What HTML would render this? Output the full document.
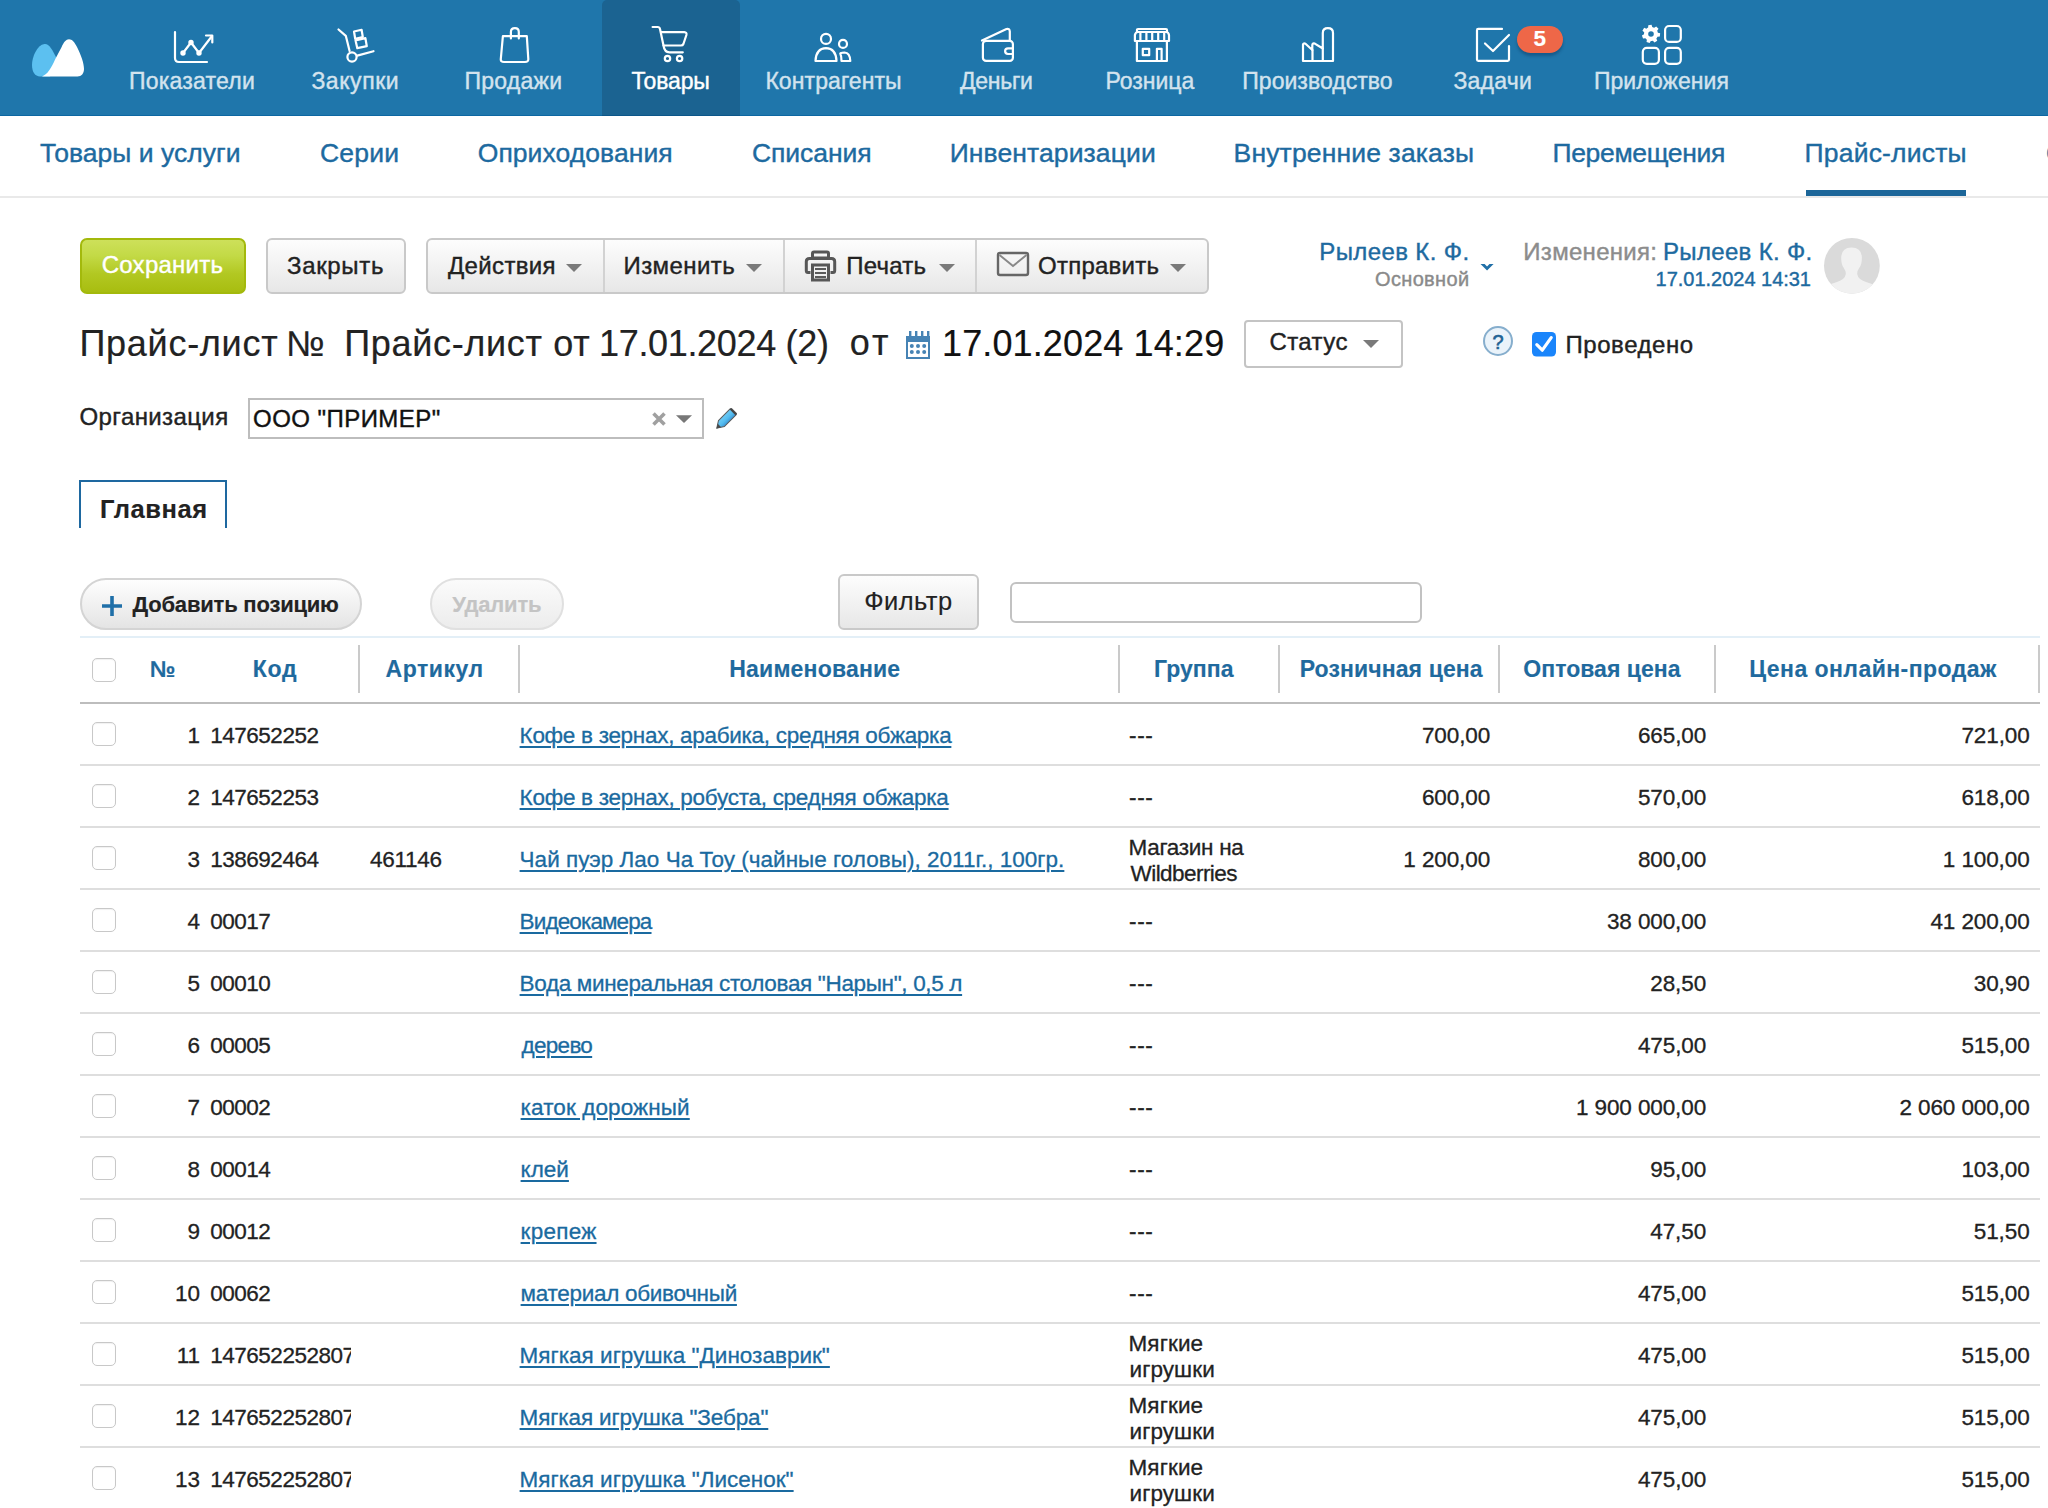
<!DOCTYPE html>
<html lang="ru"><head><meta charset="utf-8"><title>Прайс-лист</title>
<style>
html,body{margin:0;padding:0;width:2048px;height:1508px;overflow:hidden;background:#fff;}
body{position:relative;font-family:"Liberation Sans",sans-serif;}
.t{position:absolute;white-space:nowrap;font-family:"Liberation Sans",sans-serif;}
.b{position:absolute;}
</style></head><body>
<div class="b" style="left:0px;top:0px;width:2048px;height:116px;background:#1f76ab;"></div>
<div class="b" style="left:0px;top:115px;width:2048px;height:1px;background:#0c67a2;"></div>
<div class="b" style="left:602px;top:0px;width:138px;height:116px;background:#1b6391;border-top-left-radius:5px;border-top-right-radius:5px;"></div>
<div class="b" style="left:602px;top:115px;width:138px;height:1px;background:#0c5689;"></div>
<div class="t" style="top:69.6px;font-size:23px;line-height:23px;color:#d3e3ee;letter-spacing:0.222px;-webkit-text-stroke:0.4px #d3e3ee;left:129.0px;">Показатели</div>
<div class="t" style="top:69.6px;font-size:23px;line-height:23px;color:#d3e3ee;letter-spacing:0.567px;-webkit-text-stroke:0.4px #d3e3ee;left:311.4px;">Закупки</div>
<div class="t" style="top:69.6px;font-size:23px;line-height:23px;color:#d3e3ee;letter-spacing:0.267px;-webkit-text-stroke:0.4px #d3e3ee;left:464.4px;">Продажи</div>
<div class="t" style="top:69.6px;font-size:23px;line-height:23px;color:#d3e3ee;letter-spacing:0.080px;-webkit-text-stroke:0.4px #d3e3ee;left:765.4px;">Контрагенты</div>
<div class="t" style="top:69.6px;font-size:23px;line-height:23px;color:#d3e3ee;letter-spacing:-0.300px;-webkit-text-stroke:0.4px #d3e3ee;left:960.1px;">Деньги</div>
<div class="t" style="top:69.6px;font-size:23px;line-height:23px;color:#d3e3ee;-webkit-text-stroke:0.4px #d3e3ee;left:1105.4px;">Розница</div>
<div class="t" style="top:69.6px;font-size:23px;line-height:23px;color:#d3e3ee;letter-spacing:0.027px;-webkit-text-stroke:0.4px #d3e3ee;left:1242.3px;">Производство</div>
<div class="t" style="top:69.6px;font-size:23px;line-height:23px;color:#d3e3ee;letter-spacing:0.260px;-webkit-text-stroke:0.4px #d3e3ee;left:1453.4px;">Задачи</div>
<div class="t" style="top:69.6px;font-size:23px;line-height:23px;color:#d3e3ee;letter-spacing:0.056px;-webkit-text-stroke:0.4px #d3e3ee;left:1593.9px;">Приложения</div>
<div class="t" style="top:69.6px;font-size:23px;line-height:23px;color:#ffffff;letter-spacing:-0.160px;-webkit-text-stroke:0.4px #ffffff;left:631.5px;">Товары</div>
<svg class="b" style="left:0;top:0" width="2048" height="116" viewBox="0 0 2048 116" fill="none" stroke="#fff" stroke-width="2.2" stroke-linecap="round" stroke-linejoin="round"><path stroke="none" fill="#5cc0f0" d="M32 65 C32 57 37 45 44.5 44 C49 43.5 52 49 57 59 L50 76.4 L40 76.4 C35 76.4 32 72 32 65 Z"/><path stroke="none" fill="#fff" d="M42 76.4 C47 75 51.5 68 55.3 59 L61.5 47.2 C64 42 66 39.3 69 39.3 C72 39.3 74.5 42 77 47 C81 55 84 63 84 69 C84 73.5 81.5 76.4 77.5 76.4 Z"/><path d="M175 32 V58 Q175 62 179 62 H207"/><path d="M183 53 L191 42.5 L199 53 L212 36"/><path d="M206 35.5 H212.3 V42.5"/><circle cx="183" cy="53" r="1.6" fill="#fff"/><circle cx="191" cy="42.5" r="1.6" fill="#fff"/><circle cx="199" cy="53" r="1.6" fill="#fff"/><path d="M338.5 29.5 L345.8 35.8 L349.6 51"/><circle cx="352" cy="57" r="4.6"/><path d="M357.3 55.6 L373.5 51.2"/><path d="M355.5 40.3 L365.4 38.2 L366.8 46.2 L357.3 48.2 Z"/><path d="M354 31.5 L361.6 29.8 L362.8 37 L355.2 38.7 Z"/><path d="M502.9 36.1 H526.8 L528.3 59 Q528.5 62 525 62 H504 Q500.5 62 500.8 59 Z"/><path d="M510.9 38.5 V32 Q510.9 28.2 514.9 28.2 Q518.8 28.2 518.8 32 V38.5"/><path d="M652.6 27 H657.8 Q659.5 27 660 29 L663.5 45.5 Q664.5 52.3 669.5 52.3 H682.8"/><path d="M661 32.1 H684.3 Q687 32.3 686.4 35 L683.4 44 Q682.8 45.5 681 45.5 H663.5"/><circle cx="667.5" cy="58.5" r="2.7"/><circle cx="679.6" cy="58.5" r="2.7"/><circle cx="826" cy="38.9" r="5"/><path d="M815.5 61 Q816 48.5 826 48.2 Q836 48.5 836.5 61 Z"/><circle cx="843" cy="43.9" r="4"/><path d="M840.3 53.5 Q842 52.5 844.5 52.5 Q850 52.8 850.3 61 H841.5 Q841.5 56 840.3 53.5"/><rect x="982.9" y="40.9" width="30" height="20" rx="3.2"/><path d="M982 40.5 L1006.5 29 Q1009.5 28.2 1009.8 31.5 V40.5"/><path d="M1012.9 48.3 H1008 Q1005.1 48.3 1005.1 51.1 Q1005.1 54 1008 54 H1012.9"/><path d="M1136.9 61 V41.5 M1166.9 41.5 V61 H1136.9"/><path d="M1137 31.5 V29.5 Q1137 29 1138 29 H1166 Q1167 29 1167 30 V31.5"/><path d="M1134.9 41 V35 Q1135.5 32 1138 32 H1166 Q1168.5 32 1169 35 V41 Z"/><path d="M1140.4 32.5 V41 M1146.4 32.5 V41 M1152.2 32.5 V41 M1158.2 32.5 V41 M1164.2 32.5 V41"/><rect x="1142.8" y="48.8" width="6.4" height="6.4"/><path d="M1156.9 61 V48.8 H1161.6 V61"/><path d="M1303 61 V44.5 Q1303.5 42.8 1305.5 43.8 L1312.3 50 V45 Q1312.8 42.8 1314.8 43.6 L1322.8 48.5 V33 Q1322.8 28.2 1327.9 28.2 Q1333 28.2 1333 33 V61 Z"/><path d="M1312.5 50 V61 M1322.8 48.5 V61"/><path d="M1502 28.9 H1478.3 Q1477 28.9 1477 30.2 V59.6 Q1477 60.9 1478.3 60.9 H1507.7 Q1509 60.9 1509 59.6 V46"/><path d="M1485 43.5 L1493 51 L1509 35"/><rect x="1665.1" y="26" width="15.7" height="15.9" rx="4"/><rect x="1642.8" y="47.9" width="16.1" height="15.9" rx="4"/><rect x="1665.1" y="47.9" width="15.7" height="15.9" rx="4"/><path stroke="none" fill="#fff" fill-rule="evenodd" d="M1648.15 27.61 L1648.28 25.21 L1651.55 24.82 L1652.25 27.11 L1653.27 27.38 L1654.22 27.78 L1656.18 26.39 L1658.52 28.71 L1657.17 30.69 L1657.59 31.64 L1657.87 32.64 L1660.17 33.31 L1659.83 36.58 L1657.44 36.75 L1656.95 37.69 L1656.34 38.52 L1657.26 40.74 L1654.49 42.51 L1652.86 40.75 L1651.83 40.95 L1650.80 41.00 L1649.64 43.10 L1646.52 42.03 L1646.88 39.66 L1646.08 38.98 L1645.40 38.21 L1643.04 38.61 L1641.92 35.51 L1644.01 34.31 L1644.04 33.26 L1644.22 32.25 L1642.43 30.65 L1644.16 27.84 L1646.40 28.73 L1647.24 28.10 Z M1653.8 34 A2.8 2.8 0 1 0 1648.2 34 A2.8 2.8 0 1 0 1653.8 34 Z"/></svg>
<div class="b" style="left:1517px;top:26px;width:46px;height:27px;background:#ee6748;border-radius:14px;box-shadow:0 3px 3px rgba(0,40,80,0.35);"></div>
<div class="t" style="top:28.0px;font-size:22.5px;line-height:22.5px;color:#fff;font-weight:700;-webkit-text-stroke:0.15px #fff;left:1039.8px;width:1000px;text-align:center;">5</div>
<div class="t" style="top:139.6px;font-size:26.5px;line-height:26.5px;color:#1d6aa0;letter-spacing:0.036px;-webkit-text-stroke:0.4px #1d6aa0;left:40.0px;">Товары и услуги</div>
<div class="t" style="top:139.6px;font-size:26.5px;line-height:26.5px;color:#1d6aa0;letter-spacing:0.200px;-webkit-text-stroke:0.4px #1d6aa0;left:320.0px;">Серии</div>
<div class="t" style="top:139.6px;font-size:26.5px;line-height:26.5px;color:#1d6aa0;letter-spacing:0.075px;-webkit-text-stroke:0.4px #1d6aa0;left:477.7px;">Оприходования</div>
<div class="t" style="top:139.6px;font-size:26.5px;line-height:26.5px;color:#1d6aa0;letter-spacing:-0.057px;-webkit-text-stroke:0.4px #1d6aa0;left:751.9px;">Списания</div>
<div class="t" style="top:139.6px;font-size:26.5px;line-height:26.5px;color:#1d6aa0;letter-spacing:0.108px;-webkit-text-stroke:0.4px #1d6aa0;left:949.7px;">Инвентаризации</div>
<div class="t" style="top:139.6px;font-size:26.5px;line-height:26.5px;color:#1d6aa0;letter-spacing:0.150px;-webkit-text-stroke:0.4px #1d6aa0;left:1233.6px;">Внутренние заказы</div>
<div class="t" style="top:139.6px;font-size:26.5px;line-height:26.5px;color:#1d6aa0;letter-spacing:-0.340px;-webkit-text-stroke:0.4px #1d6aa0;left:1552.5px;">Перемещения</div>
<div class="t" style="top:139.6px;font-size:26.5px;line-height:26.5px;color:#1d6aa0;letter-spacing:0.180px;-webkit-text-stroke:0.4px #1d6aa0;left:1804.6px;">Прайс-листы</div>
<div class="t" style="top:139.6px;font-size:26.5px;line-height:26.5px;color:#1d6aa0;-webkit-text-stroke:0.4px #1d6aa0;left:2046.0px;">Серийные номера</div>
<div class="b" style="left:0px;top:196px;width:2048px;height:2px;background:#e9e9e9;"></div>
<div class="b" style="left:1806px;top:190px;width:160px;height:6px;background:#1c6699;"></div>
<div class="b" style="left:80px;top:238px;width:166px;height:56px;background:linear-gradient(#cde05a 0%,#c3da46 30%,#b2c822 65%,#a8bd10 100%);border:2px solid #a3b90c;border-radius:7px;box-sizing:border-box;"></div>
<div class="t" style="top:253.2px;font-size:24px;line-height:24px;color:#ffffff;letter-spacing:0.263px;-webkit-text-stroke:0.4px #ffffff;left:101.7px;">Сохранить</div>
<div class="b" style="left:266px;top:238px;width:140px;height:56px;background:linear-gradient(#fdfdfd,#e7e7e7);border:2px solid #c9c9c9;border-radius:6px;box-sizing:border-box;"></div>
<div class="t" style="top:253.7px;font-size:24px;line-height:24px;color:#222;letter-spacing:0.667px;-webkit-text-stroke:0.4px #222;left:287.0px;">Закрыть</div>
<div class="b" style="left:426px;top:238px;width:783px;height:56px;background:linear-gradient(#fdfdfd,#e7e7e7);border:2px solid #c9c9c9;border-radius:6px;box-sizing:border-box;"></div>
<div class="b" style="left:603px;top:240px;width:2px;height:52px;background:#d2d2d2;"></div>
<div class="b" style="left:783px;top:240px;width:2px;height:52px;background:#d2d2d2;"></div>
<div class="b" style="left:975px;top:240px;width:2px;height:52px;background:#d2d2d2;"></div>
<div class="t" style="top:253.7px;font-size:24px;line-height:24px;color:#222;letter-spacing:0.343px;-webkit-text-stroke:0.4px #222;left:448.0px;">Действия</div>
<div class="t" style="top:253.7px;font-size:24px;line-height:24px;color:#222;letter-spacing:0.429px;-webkit-text-stroke:0.4px #222;left:623.5px;">Изменить</div>
<div class="t" style="top:253.7px;font-size:24px;line-height:24px;color:#222;letter-spacing:0.260px;-webkit-text-stroke:0.4px #222;left:846.2px;">Печать</div>
<div class="t" style="top:253.7px;font-size:24px;line-height:24px;color:#222;letter-spacing:0.250px;-webkit-text-stroke:0.4px #222;left:1038.0px;">Отправить</div>
<svg class="b" style="left:0;top:230px" width="1300" height="70" viewBox="0 230 1300 70"><path d="M566 264 H582 L574 272 Z" fill="#7a7a7a"/><path d="M746 264 H762 L754 272 Z" fill="#7a7a7a"/><path d="M939 264 H955 L947 272 Z" fill="#7a7a7a"/><path d="M1170 264 H1186 L1178 272 Z" fill="#7a7a7a"/><g fill="none" stroke="#575757" stroke-width="3"><rect x="812.5" y="252" width="16" height="6" rx="1.5"/><path d="M810.5 272.5 H808 Q806.3 272.5 806.3 270.5 V261.5 Q806.3 258.5 809.5 258.5 H831.5 Q834.7 258.5 834.7 261.5 V270.5 Q834.7 272.5 833 272.5 H830.5"/><rect x="812.5" y="265" width="16" height="15"/></g><path d="M815 269 H826 M815 273 H826 M815 277 H826" stroke="#5a5a5a" stroke-width="1.8"/><rect x="998" y="253" width="30" height="22" rx="2" fill="none" stroke="#666" stroke-width="2.4"/><path d="M999.5 255 L1013 266 L1026.5 255" fill="none" stroke="#888" stroke-width="2"/></svg>
<div class="t" style="top:239.7px;font-size:24px;line-height:24px;color:#1d6aa0;letter-spacing:0.382px;-webkit-text-stroke:0.4px #1d6aa0;left:1319.3px;">Рылеев К. Ф.</div>
<div class="t" style="top:268.6px;font-size:20px;line-height:20px;color:#8a8a8a;letter-spacing:0.343px;-webkit-text-stroke:0.4px #8a8a8a;left:1375.0px;">Основной</div>
<svg class="b" style="left:1470px;top:255px" width="30" height="20" viewBox="1470 255 30 20"><path d="M1480.5 264 H1484.6 L1487.05 266.4 L1489.5 264 H1493.6 L1487.05 270.4 Z" fill="#2170a8"/></svg>
<div class="t" style="top:239.7px;font-size:24px;line-height:24px;color:#8c8c8c;letter-spacing:0.300px;-webkit-text-stroke:0.4px #8c8c8c;left:1523.3px;">Изменения:</div>
<div class="t" style="top:239.7px;font-size:24px;line-height:24px;color:#1d6aa0;letter-spacing:0.327px;-webkit-text-stroke:0.4px #1d6aa0;left:1663.0px;">Рылеев К. Ф.</div>
<div class="t" style="top:268.6px;font-size:20px;line-height:20px;color:#1d6aa0;letter-spacing:-0.020px;-webkit-text-stroke:0.4px #1d6aa0;left:1655.6px;">17.01.2024 14:31</div>
<svg class="b" style="left:1815px;top:230px" width="75" height="70" viewBox="1815 230 75 70"><clipPath id="av"><circle cx="1851.9" cy="265.8" r="27.9"/></clipPath><circle cx="1851.9" cy="265.8" r="27.9" fill="#dadada"/><path clip-path="url(#av)" fill="#f1f1f1" d="M1841.2 258 Q1841.2 247.4 1851.5 247.4 Q1861.9 247.4 1861.9 258 Q1861.9 264.5 1859.2 268 Q1857 271 1857.2 274 Q1858 279.5 1866 282 L1875 285 L1875 300 L1828 300 L1828 285 L1837 282 Q1845 279.5 1845.8 274 Q1846 271 1843.8 268 Q1841.2 264.5 1841.2 258 Z"/></svg>
<div class="t" style="top:325.6px;font-size:36px;line-height:36px;color:#222;letter-spacing:0.722px;-webkit-text-stroke:0.2px #222;left:79.5px;">Прайс-лист</div>
<div class="t" style="top:325.6px;font-size:36px;line-height:36px;color:#222;letter-spacing:-1.700px;-webkit-text-stroke:0.2px #222;left:285.9px;">№</div>
<div class="t" style="top:325.6px;font-size:36px;line-height:36px;color:#222;letter-spacing:0.667px;-webkit-text-stroke:0.2px #222;left:344.3px;">Прайс-лист от</div>
<div class="t" style="top:325.6px;font-size:36px;line-height:36px;color:#222;letter-spacing:-0.331px;-webkit-text-stroke:0.2px #222;left:599.0px;">17.01.2024 (2)</div>
<div class="t" style="top:324.6px;font-size:36px;line-height:36px;color:#222;letter-spacing:3.000px;-webkit-text-stroke:0.2px #222;left:849.8px;">от</div>
<div class="t" style="top:325.6px;font-size:36px;line-height:36px;color:#111;letter-spacing:0.127px;-webkit-text-stroke:0.2px #111;left:942.0px;">17.01.2024 14:29</div>
<svg class="b" style="left:905px;top:330px" width="27" height="29" viewBox="0 0 27 29" fill="#4683b4"><rect x="1" y="6" width="24" height="23"/><rect x="3" y="12" width="20" height="15" fill="#fff"/><rect x="4" y="1" width="2.4" height="6"/><rect x="10" y="1" width="2.4" height="6"/><rect x="16" y="1" width="2.4" height="6"/><rect x="22" y="1" width="2.4" height="6"/><circle cx="6.8" cy="16" r="2"/><circle cx="13" cy="16" r="2"/><circle cx="19.2" cy="16" r="2"/><circle cx="6.8" cy="22" r="2"/><circle cx="13" cy="22" r="2"/><circle cx="19.2" cy="22" r="2"/></svg>
<div class="b" style="left:1244px;top:320px;width:159px;height:48px;background:#fff;border:2px solid #c4c4c4;border-radius:4px;box-sizing:border-box;"></div>
<div class="t" style="top:329.7px;font-size:24px;line-height:24px;color:#222;letter-spacing:0.440px;-webkit-text-stroke:0.4px #222;left:1269.4px;">Статус</div>
<svg class="b" style="left:1360px;top:338px" width="22" height="14"><path d="M3 2 H19 L11 10 Z" fill="#7a7a7a"/></svg>
<svg class="b" style="left:1481px;top:325px" width="34" height="34" viewBox="0 0 34 34"><circle cx="17" cy="16" r="14" fill="#eaf3fa" stroke="#86aecd" stroke-width="2"/><text x="17" y="23.8" text-anchor="middle" font-family="Liberation Sans" font-size="20" fill="#1f6395" stroke="#1f6395" stroke-width="0.6">?</text></svg>
<svg class="b" style="left:1531px;top:331px" width="27" height="27" viewBox="0 0 27 27"><rect x="1" y="1" width="24" height="24.5" rx="4.5" fill="#1a85fb"/><path d="M5.8 13.6 L11.3 19.2 L20.2 6.6" fill="none" stroke="#fff" stroke-width="3.2" stroke-linecap="round" stroke-linejoin="round"/></svg>
<div class="t" style="top:332.7px;font-size:24px;line-height:24px;color:#222;letter-spacing:0.550px;-webkit-text-stroke:0.4px #222;left:1565.5px;">Проведено</div>
<div class="t" style="top:404.7px;font-size:24px;line-height:24px;color:#222;letter-spacing:0.390px;-webkit-text-stroke:0.4px #222;left:79.5px;">Организация</div>
<div class="b" style="left:248px;top:398px;width:456px;height:41px;background:#fff;border:2px solid #bdbdbd;box-sizing:border-box;"></div>
<div class="t" style="top:406.7px;font-size:24px;line-height:24px;color:#111;letter-spacing:0.445px;-webkit-text-stroke:0.4px #111;left:253.1px;">ООО "ПРИМЕР"</div>
<svg class="b" style="left:640px;top:400px" width="110" height="40" viewBox="640 400 110 40"><path d="M653.5 413.5 L664.5 424.5 M664.5 413.5 L653.5 424.5" stroke="#a0a0a0" stroke-width="3.6"/><path d="M676 415.3 H692 L684 423 Z" fill="#777"/><defs><linearGradient id="pg" x1="0" y1="0" x2="0" y2="1"><stop offset="0" stop-color="#6fcaf4"/><stop offset="0.55" stop-color="#55bdf0"/><stop offset="1" stop-color="#3a96d6"/></linearGradient></defs><g transform="rotate(-45 726 419)"><path d="M719.5 414.8 H736 Q737.3 414.8 737.3 416 V422 Q737.3 423.2 736 423.2 H719.5 L713 419 Z" fill="url(#pg)" stroke="#5a5a5a" stroke-width="1"/><path d="M716.8 416.6 L712.6 419 L716.8 421.4 Z" fill="#4a4a4a"/><rect x="735.3" y="415" width="2" height="8" fill="#444"/></g></svg>
<div class="b" style="left:79px;top:480px;width:148px;height:48px;border:2px solid #1e68a0;border-bottom:none;box-sizing:border-box;"></div>
<div class="t" style="top:496.5px;font-size:25.5px;line-height:25.5px;color:#222;font-weight:700;letter-spacing:0.567px;-webkit-text-stroke:0.15px #222;left:100.0px;">Главная</div>
<div class="b" style="left:80px;top:578px;width:282px;height:52px;background:linear-gradient(#fefefe,#e4e4e4);border:2px solid #d4d4d4;border-radius:26px;box-sizing:border-box;"></div>
<svg class="b" style="left:100px;top:594px" width="24" height="24"><path d="M12 2 V22 M2 12 H22" stroke="#1f6fa8" stroke-width="3.6"/></svg>
<div class="t" style="top:594.4px;font-size:22px;line-height:22px;color:#222;font-weight:700;letter-spacing:-0.200px;-webkit-text-stroke:0.15px #222;left:132.5px;">Добавить позицию</div>
<div class="b" style="left:430px;top:578px;width:134px;height:52px;background:linear-gradient(#fbfbfb,#ececec);border:2px solid #e0e0e0;border-radius:26px;box-sizing:border-box;"></div>
<div class="t" style="top:594.4px;font-size:22px;line-height:22px;color:#c4c4c4;font-weight:700;letter-spacing:-0.183px;-webkit-text-stroke:0.15px #c4c4c4;left:452.3px;">Удалить</div>
<div class="b" style="left:838px;top:574px;width:141px;height:56px;background:linear-gradient(#fdfdfd,#e7e7e7);border:2px solid #c9c9c9;border-radius:6px;box-sizing:border-box;"></div>
<div class="t" style="top:588.5px;font-size:25.5px;line-height:25.5px;color:#222;letter-spacing:0.420px;-webkit-text-stroke:0.15px #222;left:864.3px;">Фильтр</div>
<div class="b" style="left:1010px;top:582px;width:412px;height:41px;background:#fff;border:2px solid #c2c2c2;border-radius:6px;box-sizing:border-box;"></div>
<div class="b" style="left:80px;top:636px;width:1960px;height:2px;background:#e3eff7;"></div>
<div class="b" style="left:80px;top:702px;width:1960px;height:2px;background:#bdbdbd;"></div>
<div class="b" style="left:358px;top:645px;width:2px;height:48px;background:#cacaca;"></div>
<div class="b" style="left:518px;top:645px;width:2px;height:48px;background:#cacaca;"></div>
<div class="b" style="left:1118px;top:645px;width:2px;height:48px;background:#cacaca;"></div>
<div class="b" style="left:1278px;top:645px;width:2px;height:48px;background:#cacaca;"></div>
<div class="b" style="left:1498px;top:645px;width:2px;height:48px;background:#cacaca;"></div>
<div class="b" style="left:1714px;top:645px;width:2px;height:48px;background:#cacaca;"></div>
<div class="b" style="left:2038px;top:645px;width:2px;height:48px;background:#cacaca;"></div>
<div class="b" style="left:92px;top:658px;width:24px;height:24px;background:#fff;border:1.5px solid #c8c8c8;border-radius:5px;box-sizing:border-box;box-shadow:inset 0 1px 1px rgba(0,0,0,0.06);"></div>
<div class="t" style="top:657.6px;font-size:23px;line-height:23px;color:#1f6a9e;font-weight:700;letter-spacing:2.700px;-webkit-text-stroke:0.15px #1f6a9e;left:149.9px;">№</div>
<div class="t" style="top:657.6px;font-size:23px;line-height:23px;color:#1f6a9e;font-weight:700;letter-spacing:0.750px;-webkit-text-stroke:0.15px #1f6a9e;left:252.8px;">Код</div>
<div class="t" style="top:657.6px;font-size:23px;line-height:23px;color:#1f6a9e;font-weight:700;letter-spacing:0.533px;-webkit-text-stroke:0.15px #1f6a9e;left:385.6px;">Артикул</div>
<div class="t" style="top:657.6px;font-size:23px;line-height:23px;color:#1f6a9e;font-weight:700;letter-spacing:0.191px;-webkit-text-stroke:0.15px #1f6a9e;left:729.3px;">Наименование</div>
<div class="t" style="top:657.6px;font-size:23px;line-height:23px;color:#1f6a9e;font-weight:700;letter-spacing:0.040px;-webkit-text-stroke:0.15px #1f6a9e;left:1154.0px;">Группа</div>
<div class="t" style="top:657.6px;font-size:23px;line-height:23px;color:#1f6a9e;font-weight:700;letter-spacing:0.115px;-webkit-text-stroke:0.15px #1f6a9e;left:1299.7px;">Розничная цена</div>
<div class="t" style="top:657.6px;font-size:23px;line-height:23px;color:#1f6a9e;font-weight:700;letter-spacing:0.036px;-webkit-text-stroke:0.15px #1f6a9e;left:1523.3px;">Оптовая цена</div>
<div class="t" style="top:657.6px;font-size:23px;line-height:23px;color:#1f6a9e;font-weight:700;letter-spacing:0.453px;-webkit-text-stroke:0.15px #1f6a9e;left:1749.3px;">Цена онлайн-продаж</div>
<div class="b" style="left:80px;top:764px;width:1960px;height:2px;background:#dedede;"></div>
<div class="b" style="left:92px;top:722px;width:24px;height:24px;background:#fff;border:1.5px solid #c8c8c8;border-radius:5px;box-sizing:border-box;box-shadow:inset 0 1px 1px rgba(0,0,0,0.06);"></div>
<div class="t" style="top:724.5px;font-size:22.5px;line-height:22.5px;color:#222;letter-spacing:-0.100px;-webkit-text-stroke:0.3px #222;right:1848.1px;">1</div>
<div class="b" style="left:207px;top:715px;width:144px;height:40px;overflow:hidden">
<div class="t" style="top:9.5px;font-size:22.5px;line-height:22.5px;color:#222;letter-spacing:-0.500px;-webkit-text-stroke:0.3px #222;left:3.3px;">147652252</div>
</div>
<div class="t" style="top:724.5px;font-size:22.5px;line-height:22.5px;color:#1a6aa0;letter-spacing:-0.295px;-webkit-text-stroke:0.3px #1a6aa0;left:519.6px;text-decoration:underline;text-underline-offset:3px;text-decoration-thickness:1.6px;">Кофе в зернах, арабика, средняя обжарка</div>
<div class="t" style="top:724.5px;font-size:22.5px;line-height:22.5px;color:#222;letter-spacing:0.650px;-webkit-text-stroke:0.3px #222;left:1129.0px;">---</div>
<div class="t" style="top:724.5px;font-size:22.5px;line-height:22.5px;color:#222;letter-spacing:-0.100px;-webkit-text-stroke:0.3px #222;right:557.9px;">700,00</div>
<div class="t" style="top:724.5px;font-size:22.5px;line-height:22.5px;color:#222;letter-spacing:-0.100px;-webkit-text-stroke:0.3px #222;right:341.9px;">665,00</div>
<div class="t" style="top:724.5px;font-size:22.5px;line-height:22.5px;color:#222;letter-spacing:-0.100px;-webkit-text-stroke:0.3px #222;right:18.4px;">721,00</div>
<div class="b" style="left:80px;top:826px;width:1960px;height:2px;background:#dedede;"></div>
<div class="b" style="left:92px;top:784px;width:24px;height:24px;background:#fff;border:1.5px solid #c8c8c8;border-radius:5px;box-sizing:border-box;box-shadow:inset 0 1px 1px rgba(0,0,0,0.06);"></div>
<div class="t" style="top:786.5px;font-size:22.5px;line-height:22.5px;color:#222;letter-spacing:-0.100px;-webkit-text-stroke:0.3px #222;right:1848.1px;">2</div>
<div class="b" style="left:207px;top:777px;width:144px;height:40px;overflow:hidden">
<div class="t" style="top:9.5px;font-size:22.5px;line-height:22.5px;color:#222;letter-spacing:-0.500px;-webkit-text-stroke:0.3px #222;left:3.3px;">147652253</div>
</div>
<div class="t" style="top:786.5px;font-size:22.5px;line-height:22.5px;color:#1a6aa0;letter-spacing:-0.274px;-webkit-text-stroke:0.3px #1a6aa0;left:519.6px;text-decoration:underline;text-underline-offset:3px;text-decoration-thickness:1.6px;">Кофе в зернах, робуста, средняя обжарка</div>
<div class="t" style="top:786.5px;font-size:22.5px;line-height:22.5px;color:#222;letter-spacing:0.650px;-webkit-text-stroke:0.3px #222;left:1129.0px;">---</div>
<div class="t" style="top:786.5px;font-size:22.5px;line-height:22.5px;color:#222;letter-spacing:-0.100px;-webkit-text-stroke:0.3px #222;right:557.9px;">600,00</div>
<div class="t" style="top:786.5px;font-size:22.5px;line-height:22.5px;color:#222;letter-spacing:-0.100px;-webkit-text-stroke:0.3px #222;right:341.9px;">570,00</div>
<div class="t" style="top:786.5px;font-size:22.5px;line-height:22.5px;color:#222;letter-spacing:-0.100px;-webkit-text-stroke:0.3px #222;right:18.4px;">618,00</div>
<div class="b" style="left:80px;top:888px;width:1960px;height:2px;background:#dedede;"></div>
<div class="b" style="left:92px;top:846px;width:24px;height:24px;background:#fff;border:1.5px solid #c8c8c8;border-radius:5px;box-sizing:border-box;box-shadow:inset 0 1px 1px rgba(0,0,0,0.06);"></div>
<div class="t" style="top:848.5px;font-size:22.5px;line-height:22.5px;color:#222;letter-spacing:-0.100px;-webkit-text-stroke:0.3px #222;right:1848.1px;">3</div>
<div class="b" style="left:207px;top:839px;width:144px;height:40px;overflow:hidden">
<div class="t" style="top:9.5px;font-size:22.5px;line-height:22.5px;color:#222;letter-spacing:-0.500px;-webkit-text-stroke:0.3px #222;left:3.3px;">138692464</div>
</div>
<div class="t" style="top:848.5px;font-size:22.5px;line-height:22.5px;color:#222;letter-spacing:-0.300px;-webkit-text-stroke:0.3px #222;left:370.0px;">461146</div>
<div class="t" style="top:848.5px;font-size:22.5px;line-height:22.5px;color:#1a6aa0;letter-spacing:0.018px;-webkit-text-stroke:0.3px #1a6aa0;left:519.6px;text-decoration:underline;text-underline-offset:3px;text-decoration-thickness:1.6px;">Чай пуэр Лао Ча Тоу (чайные головы), 2011г., 100гр.</div>
<div class="t" style="top:836.5px;font-size:22.5px;line-height:22.5px;color:#222;letter-spacing:-0.300px;-webkit-text-stroke:0.3px #222;left:1128.5px;">Магазин на</div>
<div class="t" style="top:862.5px;font-size:22.5px;line-height:22.5px;color:#222;letter-spacing:-0.550px;-webkit-text-stroke:0.3px #222;left:1130.5px;">Wildberries</div>
<div class="t" style="top:848.5px;font-size:22.5px;line-height:22.5px;color:#222;letter-spacing:-0.100px;-webkit-text-stroke:0.3px #222;right:557.9px;">1 200,00</div>
<div class="t" style="top:848.5px;font-size:22.5px;line-height:22.5px;color:#222;letter-spacing:-0.100px;-webkit-text-stroke:0.3px #222;right:341.9px;">800,00</div>
<div class="t" style="top:848.5px;font-size:22.5px;line-height:22.5px;color:#222;letter-spacing:-0.100px;-webkit-text-stroke:0.3px #222;right:18.4px;">1 100,00</div>
<div class="b" style="left:80px;top:950px;width:1960px;height:2px;background:#dedede;"></div>
<div class="b" style="left:92px;top:908px;width:24px;height:24px;background:#fff;border:1.5px solid #c8c8c8;border-radius:5px;box-sizing:border-box;box-shadow:inset 0 1px 1px rgba(0,0,0,0.06);"></div>
<div class="t" style="top:910.5px;font-size:22.5px;line-height:22.5px;color:#222;letter-spacing:-0.100px;-webkit-text-stroke:0.3px #222;right:1848.1px;">4</div>
<div class="b" style="left:207px;top:901px;width:144px;height:40px;overflow:hidden">
<div class="t" style="top:9.5px;font-size:22.5px;line-height:22.5px;color:#222;letter-spacing:-0.500px;-webkit-text-stroke:0.3px #222;left:3.3px;">00017</div>
</div>
<div class="t" style="top:910.5px;font-size:22.5px;line-height:22.5px;color:#1a6aa0;letter-spacing:-0.880px;-webkit-text-stroke:0.3px #1a6aa0;left:519.6px;text-decoration:underline;text-underline-offset:3px;text-decoration-thickness:1.6px;">Видеокамера</div>
<div class="t" style="top:910.5px;font-size:22.5px;line-height:22.5px;color:#222;letter-spacing:0.650px;-webkit-text-stroke:0.3px #222;left:1129.0px;">---</div>
<div class="t" style="top:910.5px;font-size:22.5px;line-height:22.5px;color:#222;letter-spacing:-0.100px;-webkit-text-stroke:0.3px #222;right:341.9px;">38 000,00</div>
<div class="t" style="top:910.5px;font-size:22.5px;line-height:22.5px;color:#222;letter-spacing:-0.100px;-webkit-text-stroke:0.3px #222;right:18.4px;">41 200,00</div>
<div class="b" style="left:80px;top:1012px;width:1960px;height:2px;background:#dedede;"></div>
<div class="b" style="left:92px;top:970px;width:24px;height:24px;background:#fff;border:1.5px solid #c8c8c8;border-radius:5px;box-sizing:border-box;box-shadow:inset 0 1px 1px rgba(0,0,0,0.06);"></div>
<div class="t" style="top:972.5px;font-size:22.5px;line-height:22.5px;color:#222;letter-spacing:-0.100px;-webkit-text-stroke:0.3px #222;right:1848.1px;">5</div>
<div class="b" style="left:207px;top:963px;width:144px;height:40px;overflow:hidden">
<div class="t" style="top:9.5px;font-size:22.5px;line-height:22.5px;color:#222;letter-spacing:-0.500px;-webkit-text-stroke:0.3px #222;left:3.3px;">00010</div>
</div>
<div class="t" style="top:972.5px;font-size:22.5px;line-height:22.5px;color:#1a6aa0;letter-spacing:-0.338px;-webkit-text-stroke:0.3px #1a6aa0;left:519.6px;text-decoration:underline;text-underline-offset:3px;text-decoration-thickness:1.6px;">Вода минеральная столовая "Нарын", 0,5 л</div>
<div class="t" style="top:972.5px;font-size:22.5px;line-height:22.5px;color:#222;letter-spacing:0.650px;-webkit-text-stroke:0.3px #222;left:1129.0px;">---</div>
<div class="t" style="top:972.5px;font-size:22.5px;line-height:22.5px;color:#222;letter-spacing:-0.100px;-webkit-text-stroke:0.3px #222;right:341.9px;">28,50</div>
<div class="t" style="top:972.5px;font-size:22.5px;line-height:22.5px;color:#222;letter-spacing:-0.100px;-webkit-text-stroke:0.3px #222;right:18.4px;">30,90</div>
<div class="b" style="left:80px;top:1074px;width:1960px;height:2px;background:#dedede;"></div>
<div class="b" style="left:92px;top:1032px;width:24px;height:24px;background:#fff;border:1.5px solid #c8c8c8;border-radius:5px;box-sizing:border-box;box-shadow:inset 0 1px 1px rgba(0,0,0,0.06);"></div>
<div class="t" style="top:1034.5px;font-size:22.5px;line-height:22.5px;color:#222;letter-spacing:-0.100px;-webkit-text-stroke:0.3px #222;right:1848.1px;">6</div>
<div class="b" style="left:207px;top:1025px;width:144px;height:40px;overflow:hidden">
<div class="t" style="top:9.5px;font-size:22.5px;line-height:22.5px;color:#222;letter-spacing:-0.500px;-webkit-text-stroke:0.3px #222;left:3.3px;">00005</div>
</div>
<div class="t" style="top:1034.5px;font-size:22.5px;line-height:22.5px;color:#1a6aa0;letter-spacing:-0.720px;-webkit-text-stroke:0.3px #1a6aa0;left:521.6px;text-decoration:underline;text-underline-offset:3px;text-decoration-thickness:1.6px;">дерево</div>
<div class="t" style="top:1034.5px;font-size:22.5px;line-height:22.5px;color:#222;letter-spacing:0.650px;-webkit-text-stroke:0.3px #222;left:1129.0px;">---</div>
<div class="t" style="top:1034.5px;font-size:22.5px;line-height:22.5px;color:#222;letter-spacing:-0.100px;-webkit-text-stroke:0.3px #222;right:341.9px;">475,00</div>
<div class="t" style="top:1034.5px;font-size:22.5px;line-height:22.5px;color:#222;letter-spacing:-0.100px;-webkit-text-stroke:0.3px #222;right:18.4px;">515,00</div>
<div class="b" style="left:80px;top:1136px;width:1960px;height:2px;background:#dedede;"></div>
<div class="b" style="left:92px;top:1094px;width:24px;height:24px;background:#fff;border:1.5px solid #c8c8c8;border-radius:5px;box-sizing:border-box;box-shadow:inset 0 1px 1px rgba(0,0,0,0.06);"></div>
<div class="t" style="top:1096.5px;font-size:22.5px;line-height:22.5px;color:#222;letter-spacing:-0.100px;-webkit-text-stroke:0.3px #222;right:1848.1px;">7</div>
<div class="b" style="left:207px;top:1087px;width:144px;height:40px;overflow:hidden">
<div class="t" style="top:9.5px;font-size:22.5px;line-height:22.5px;color:#222;letter-spacing:-0.500px;-webkit-text-stroke:0.3px #222;left:3.3px;">00002</div>
</div>
<div class="t" style="top:1096.5px;font-size:22.5px;line-height:22.5px;color:#1a6aa0;letter-spacing:0.108px;-webkit-text-stroke:0.3px #1a6aa0;left:520.6px;text-decoration:underline;text-underline-offset:3px;text-decoration-thickness:1.6px;">каток дорожный</div>
<div class="t" style="top:1096.5px;font-size:22.5px;line-height:22.5px;color:#222;letter-spacing:0.650px;-webkit-text-stroke:0.3px #222;left:1129.0px;">---</div>
<div class="t" style="top:1096.5px;font-size:22.5px;line-height:22.5px;color:#222;letter-spacing:-0.100px;-webkit-text-stroke:0.3px #222;right:341.9px;">1 900 000,00</div>
<div class="t" style="top:1096.5px;font-size:22.5px;line-height:22.5px;color:#222;letter-spacing:-0.100px;-webkit-text-stroke:0.3px #222;right:18.4px;">2 060 000,00</div>
<div class="b" style="left:80px;top:1198px;width:1960px;height:2px;background:#dedede;"></div>
<div class="b" style="left:92px;top:1156px;width:24px;height:24px;background:#fff;border:1.5px solid #c8c8c8;border-radius:5px;box-sizing:border-box;box-shadow:inset 0 1px 1px rgba(0,0,0,0.06);"></div>
<div class="t" style="top:1158.5px;font-size:22.5px;line-height:22.5px;color:#222;letter-spacing:-0.100px;-webkit-text-stroke:0.3px #222;right:1848.1px;">8</div>
<div class="b" style="left:207px;top:1149px;width:144px;height:40px;overflow:hidden">
<div class="t" style="top:9.5px;font-size:22.5px;line-height:22.5px;color:#222;letter-spacing:-0.500px;-webkit-text-stroke:0.3px #222;left:3.3px;">00014</div>
</div>
<div class="t" style="top:1158.5px;font-size:22.5px;line-height:22.5px;color:#1a6aa0;-webkit-text-stroke:0.3px #1a6aa0;left:520.6px;text-decoration:underline;text-underline-offset:3px;text-decoration-thickness:1.6px;">клей</div>
<div class="t" style="top:1158.5px;font-size:22.5px;line-height:22.5px;color:#222;letter-spacing:0.650px;-webkit-text-stroke:0.3px #222;left:1129.0px;">---</div>
<div class="t" style="top:1158.5px;font-size:22.5px;line-height:22.5px;color:#222;letter-spacing:-0.100px;-webkit-text-stroke:0.3px #222;right:341.9px;">95,00</div>
<div class="t" style="top:1158.5px;font-size:22.5px;line-height:22.5px;color:#222;letter-spacing:-0.100px;-webkit-text-stroke:0.3px #222;right:18.4px;">103,00</div>
<div class="b" style="left:80px;top:1260px;width:1960px;height:2px;background:#dedede;"></div>
<div class="b" style="left:92px;top:1218px;width:24px;height:24px;background:#fff;border:1.5px solid #c8c8c8;border-radius:5px;box-sizing:border-box;box-shadow:inset 0 1px 1px rgba(0,0,0,0.06);"></div>
<div class="t" style="top:1220.5px;font-size:22.5px;line-height:22.5px;color:#222;letter-spacing:-0.100px;-webkit-text-stroke:0.3px #222;right:1848.1px;">9</div>
<div class="b" style="left:207px;top:1211px;width:144px;height:40px;overflow:hidden">
<div class="t" style="top:9.5px;font-size:22.5px;line-height:22.5px;color:#222;letter-spacing:-0.500px;-webkit-text-stroke:0.3px #222;left:3.3px;">00012</div>
</div>
<div class="t" style="top:1220.5px;font-size:22.5px;line-height:22.5px;color:#1a6aa0;letter-spacing:0.260px;-webkit-text-stroke:0.3px #1a6aa0;left:520.6px;text-decoration:underline;text-underline-offset:3px;text-decoration-thickness:1.6px;">крепеж</div>
<div class="t" style="top:1220.5px;font-size:22.5px;line-height:22.5px;color:#222;letter-spacing:0.650px;-webkit-text-stroke:0.3px #222;left:1129.0px;">---</div>
<div class="t" style="top:1220.5px;font-size:22.5px;line-height:22.5px;color:#222;letter-spacing:-0.100px;-webkit-text-stroke:0.3px #222;right:341.9px;">47,50</div>
<div class="t" style="top:1220.5px;font-size:22.5px;line-height:22.5px;color:#222;letter-spacing:-0.100px;-webkit-text-stroke:0.3px #222;right:18.4px;">51,50</div>
<div class="b" style="left:80px;top:1322px;width:1960px;height:2px;background:#dedede;"></div>
<div class="b" style="left:92px;top:1280px;width:24px;height:24px;background:#fff;border:1.5px solid #c8c8c8;border-radius:5px;box-sizing:border-box;box-shadow:inset 0 1px 1px rgba(0,0,0,0.06);"></div>
<div class="t" style="top:1282.5px;font-size:22.5px;line-height:22.5px;color:#222;letter-spacing:-0.100px;-webkit-text-stroke:0.3px #222;right:1848.1px;">10</div>
<div class="b" style="left:207px;top:1273px;width:144px;height:40px;overflow:hidden">
<div class="t" style="top:9.5px;font-size:22.5px;line-height:22.5px;color:#222;letter-spacing:-0.500px;-webkit-text-stroke:0.3px #222;left:3.3px;">00062</div>
</div>
<div class="t" style="top:1282.5px;font-size:22.5px;line-height:22.5px;color:#1a6aa0;letter-spacing:-0.294px;-webkit-text-stroke:0.3px #1a6aa0;left:520.6px;text-decoration:underline;text-underline-offset:3px;text-decoration-thickness:1.6px;">материал обивочный</div>
<div class="t" style="top:1282.5px;font-size:22.5px;line-height:22.5px;color:#222;letter-spacing:0.650px;-webkit-text-stroke:0.3px #222;left:1129.0px;">---</div>
<div class="t" style="top:1282.5px;font-size:22.5px;line-height:22.5px;color:#222;letter-spacing:-0.100px;-webkit-text-stroke:0.3px #222;right:341.9px;">475,00</div>
<div class="t" style="top:1282.5px;font-size:22.5px;line-height:22.5px;color:#222;letter-spacing:-0.100px;-webkit-text-stroke:0.3px #222;right:18.4px;">515,00</div>
<div class="b" style="left:80px;top:1384px;width:1960px;height:2px;background:#dedede;"></div>
<div class="b" style="left:92px;top:1342px;width:24px;height:24px;background:#fff;border:1.5px solid #c8c8c8;border-radius:5px;box-sizing:border-box;box-shadow:inset 0 1px 1px rgba(0,0,0,0.06);"></div>
<div class="t" style="top:1344.5px;font-size:22.5px;line-height:22.5px;color:#222;letter-spacing:-0.100px;-webkit-text-stroke:0.3px #222;right:1848.1px;">11</div>
<div class="b" style="left:207px;top:1335px;width:144px;height:40px;overflow:hidden">
<div class="t" style="top:9.5px;font-size:22.5px;line-height:22.5px;color:#222;letter-spacing:-0.500px;-webkit-text-stroke:0.3px #222;left:3.3px;">147652252807</div>
</div>
<div class="t" style="top:1344.5px;font-size:22.5px;line-height:22.5px;color:#1a6aa0;letter-spacing:0.008px;-webkit-text-stroke:0.3px #1a6aa0;left:519.6px;text-decoration:underline;text-underline-offset:3px;text-decoration-thickness:1.6px;">Мягкая игрушка "Динозаврик"</div>
<div class="t" style="top:1332.5px;font-size:22.5px;line-height:22.5px;color:#222;letter-spacing:0.100px;-webkit-text-stroke:0.3px #222;left:1128.5px;">Мягкие</div>
<div class="t" style="top:1358.5px;font-size:22.5px;line-height:22.5px;color:#222;letter-spacing:0.083px;-webkit-text-stroke:0.3px #222;left:1129.5px;">игрушки</div>
<div class="t" style="top:1344.5px;font-size:22.5px;line-height:22.5px;color:#222;letter-spacing:-0.100px;-webkit-text-stroke:0.3px #222;right:341.9px;">475,00</div>
<div class="t" style="top:1344.5px;font-size:22.5px;line-height:22.5px;color:#222;letter-spacing:-0.100px;-webkit-text-stroke:0.3px #222;right:18.4px;">515,00</div>
<div class="b" style="left:80px;top:1446px;width:1960px;height:2px;background:#dedede;"></div>
<div class="b" style="left:92px;top:1404px;width:24px;height:24px;background:#fff;border:1.5px solid #c8c8c8;border-radius:5px;box-sizing:border-box;box-shadow:inset 0 1px 1px rgba(0,0,0,0.06);"></div>
<div class="t" style="top:1406.5px;font-size:22.5px;line-height:22.5px;color:#222;letter-spacing:-0.100px;-webkit-text-stroke:0.3px #222;right:1848.1px;">12</div>
<div class="b" style="left:207px;top:1397px;width:144px;height:40px;overflow:hidden">
<div class="t" style="top:9.5px;font-size:22.5px;line-height:22.5px;color:#222;letter-spacing:-0.500px;-webkit-text-stroke:0.3px #222;left:3.3px;">147652252807</div>
</div>
<div class="t" style="top:1406.5px;font-size:22.5px;line-height:22.5px;color:#1a6aa0;letter-spacing:-0.133px;-webkit-text-stroke:0.3px #1a6aa0;left:519.6px;text-decoration:underline;text-underline-offset:3px;text-decoration-thickness:1.6px;">Мягкая игрушка "Зебра"</div>
<div class="t" style="top:1394.5px;font-size:22.5px;line-height:22.5px;color:#222;letter-spacing:0.100px;-webkit-text-stroke:0.3px #222;left:1128.5px;">Мягкие</div>
<div class="t" style="top:1420.5px;font-size:22.5px;line-height:22.5px;color:#222;letter-spacing:0.083px;-webkit-text-stroke:0.3px #222;left:1129.5px;">игрушки</div>
<div class="t" style="top:1406.5px;font-size:22.5px;line-height:22.5px;color:#222;letter-spacing:-0.100px;-webkit-text-stroke:0.3px #222;right:341.9px;">475,00</div>
<div class="t" style="top:1406.5px;font-size:22.5px;line-height:22.5px;color:#222;letter-spacing:-0.100px;-webkit-text-stroke:0.3px #222;right:18.4px;">515,00</div>
<div class="b" style="left:80px;top:1508px;width:1960px;height:2px;background:#dedede;"></div>
<div class="b" style="left:92px;top:1466px;width:24px;height:24px;background:#fff;border:1.5px solid #c8c8c8;border-radius:5px;box-sizing:border-box;box-shadow:inset 0 1px 1px rgba(0,0,0,0.06);"></div>
<div class="t" style="top:1468.5px;font-size:22.5px;line-height:22.5px;color:#222;letter-spacing:-0.100px;-webkit-text-stroke:0.3px #222;right:1848.1px;">13</div>
<div class="b" style="left:207px;top:1459px;width:144px;height:40px;overflow:hidden">
<div class="t" style="top:9.5px;font-size:22.5px;line-height:22.5px;color:#222;letter-spacing:-0.500px;-webkit-text-stroke:0.3px #222;left:3.3px;">147652252807</div>
</div>
<div class="t" style="top:1468.5px;font-size:22.5px;line-height:22.5px;color:#1a6aa0;letter-spacing:0.013px;-webkit-text-stroke:0.3px #1a6aa0;left:519.6px;text-decoration:underline;text-underline-offset:3px;text-decoration-thickness:1.6px;">Мягкая игрушка "Лисенок"</div>
<div class="t" style="top:1456.5px;font-size:22.5px;line-height:22.5px;color:#222;letter-spacing:0.100px;-webkit-text-stroke:0.3px #222;left:1128.5px;">Мягкие</div>
<div class="t" style="top:1482.5px;font-size:22.5px;line-height:22.5px;color:#222;letter-spacing:0.083px;-webkit-text-stroke:0.3px #222;left:1129.5px;">игрушки</div>
<div class="t" style="top:1468.5px;font-size:22.5px;line-height:22.5px;color:#222;letter-spacing:-0.100px;-webkit-text-stroke:0.3px #222;right:341.9px;">475,00</div>
<div class="t" style="top:1468.5px;font-size:22.5px;line-height:22.5px;color:#222;letter-spacing:-0.100px;-webkit-text-stroke:0.3px #222;right:18.4px;">515,00</div>
</body></html>
